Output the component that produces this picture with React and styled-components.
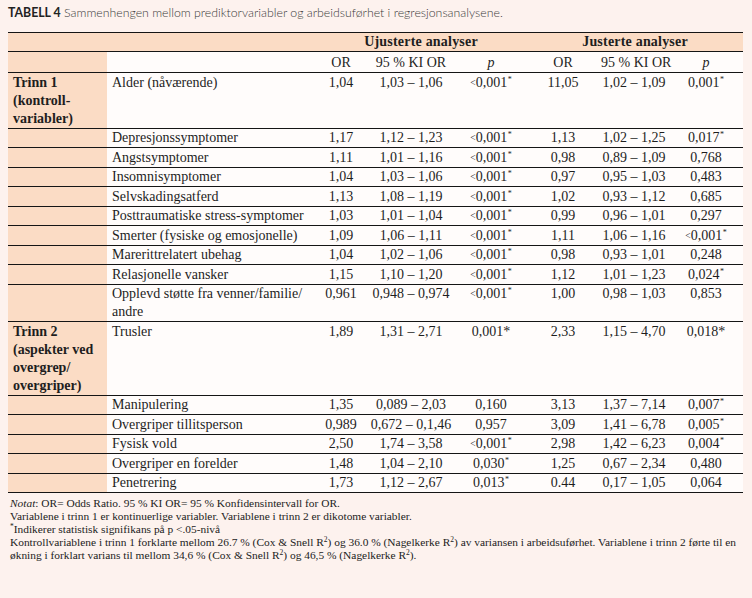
import React from "react";
import styled, { createGlobalStyle } from "styled-components";

const GlobalStyle = createGlobalStyle`
  html, body { margin: 0; padding: 0; }
  body { background: #fdf2ee; }
`;

const Page = styled.div`
  width: 752px;
  height: 598px;
  box-sizing: border-box;
  padding: 5px 9px 0 8px;
  background: #fdf2ee;
  overflow: hidden;
`;

const Caption = styled.div`
  font-family: Lato, "Open Sans", sans-serif;
  font-size: 12.3px;
  line-height: 16px;
  color: #3a3a3a;
  font-weight: 300;
  margin-bottom: 11px;
  b { font-weight: 700; color: #222; }
`;

const Table = styled.table`
  width: 735px;
  table-layout: fixed;
  border-collapse: collapse;
  background: #fffcfb;
  font-family: "Liberation Serif", "Times New Roman", serif;
  font-size: 14px;
  color: #1e1e1e;
  border-top: 1.5px solid #151515;
`;

const Th = styled.th`
  font-weight: ${(p) => (p.$bold ? 700 : 400)};
  font-style: ${(p) => (p.$italic ? "italic" : "normal")};
  text-align: center;
  white-space: nowrap;
  padding: ${(p) => (p.$top ? "0 2px 0" : "1px 2px 0")};
  height: ${(p) => (p.$top ? "18px" : "19px")};
  line-height: 18px;
  border-bottom: 1px solid #151515;
  background: ${(p) => (p.$peach ? "#fbdcc5" : "transparent")};
  letter-spacing: ${(p) => (p.$bold ? "0.2px" : "0")};
`;

const HeadRow = styled.tr`
  background: ${(p) => (p.$peach ? "#fbdcc5" : "transparent")};
`;

const StepCell = styled.td`
  background: #fbdcc5;
  font-weight: 700;
  padding: 0.5px 5px 0;
  line-height: 18px;
  vertical-align: top;
  border-bottom: 1px solid #151515;
`;

const LabelCell = styled.td`
  padding: 0.5px 5px 0;
  line-height: 18px;
  vertical-align: top;
  border-bottom: 1px solid #151515;
  white-space: nowrap;
`;

const NumCell = styled.td`
  padding: 0.5px 2px 0;
  line-height: 18px;
  vertical-align: top;
  text-align: center;
  white-space: nowrap;
  border-bottom: 1px solid #151515;
`;

const Star = styled.span`
  font-size: 8px;
  line-height: 0;
  position: relative;
  top: -5px;
  margin-left: 0.5px;
`;

const Lt = styled.span`
  font-size: 9.5px;
  line-height: 0;
  position: relative;
  top: -1px;
`;

const Notes = styled.div`
  margin-top: 4px;
  padding-left: 2px;
  font-family: "Liberation Serif", "Times New Roman", serif;
  font-size: 11.4px;
  line-height: 13px;
  color: #222;
  width: 733px;
  i { font-style: italic; }
  sup { font-size: 7.5px; line-height: 0; vertical-align: 4px; }
`;

const NoteLine = styled.div``;

const Pval = ({ v }) => {
  let lt = false;
  let sup = false;
  let plain = false;
  let s = v;
  if (s.startsWith("<")) {
    lt = true;
    s = s.slice(1);
  }
  if (s.endsWith("*")) {
    sup = true;
    s = s.slice(0, -1);
  } else if (s.endsWith("+")) {
    plain = true;
    s = s.slice(0, -1);
  }
  return (
    <>
      {lt && <Lt>&lt;</Lt>}
      {s}
      {sup && <Star>*</Star>}
      {plain && "*"}
    </>
  );
};

const step1 = [
  ["Alder (nåværende)", "1,04", "1,03 – 1,06", "<0,001*", "11,05", "1,02 – 1,09", "0,001*"],
  ["Depresjonssymptomer", "1,17", "1,12 – 1,23", "<0,001*", "1,13", "1,02 – 1,25", "0,017*"],
  ["Angstsymptomer", "1,11", "1,01 – 1,16", "<0,001*", "0,98", "0,89 – 1,09", "0,768"],
  ["Insomnisymptomer", "1,04", "1,03 – 1,06", "<0,001*", "0,97", "0,95 – 1,03", "0,483"],
  ["Selvskadingsatferd", "1,13", "1,08 – 1,19", "<0,001*", "1,02", "0,93 – 1,12", "0,685"],
  ["Posttraumatiske stress-symptomer", "1,03", "1,01 – 1,04", "<0,001*", "0,99", "0,96 – 1,01", "0,297"],
  ["Smerter (fysiske og emosjonelle)", "1,09", "1,06 – 1,11", "<0,001*", "1,11", "1,06 – 1,16", "<0,001*"],
  ["Marerittrelatert ubehag", "1,04", "1,02 – 1,06", "<0,001*", "0,98", "0,93 – 1,01", "0,248"],
  ["Relasjonelle vansker", "1,15", "1,10 – 1,20", "<0,001*", "1,12", "1,01 – 1,23", "0,024*"],
  [["Opplevd støtte fra venner/familie/", "andre"], "0,961", "0,948 – 0,974", "<0,001*", "1,00", "0,98 – 1,03", "0,853"],
];

const step2 = [
  ["Trusler", "1,89", "1,31 – 2,71", "0,001+", "2,33", "1,15 – 4,70", "0,018+"],
  ["Manipulering", "1,35", "0,089 – 2,03", "0,160", "3,13", "1,37 – 7,14", "0,007*"],
  ["Overgriper tillitsperson", "0,989", "0,672 – 0,1,46", "0,957", "3,09", "1,41 – 6,78", "0,005*"],
  ["Fysisk vold", "2,50", "1,74 – 3,58", "<0,001*", "2,98", "1,42 – 6,23", "0,004*"],
  ["Overgriper en forelder", "1,48", "1,04 – 2,10", "0,030*", "1,25", "0,67 – 2,34", "0,480"],
  ["Penetrering", "1,73", "1,12 – 2,67", "0,013*", "0.44", "0,17 – 1,05", "0,064"],
];

const Lines = ({ lines }) =>
  lines.map((l, i) => (
    <React.Fragment key={i}>
      {i > 0 && <br />}
      {l}
    </React.Fragment>
  ));

const DataRow = ({ row, step }) => {
  const [label, or1, ci1, p1, or2, ci2, p2] = row;
  return (
    <tr>
      <StepCell>{step ? <Lines lines={step} /> : null}</StepCell>
      <LabelCell>{Array.isArray(label) ? <Lines lines={label} /> : label}</LabelCell>
      <NumCell>{or1}</NumCell>
      <NumCell>{ci1}</NumCell>
      <NumCell><Pval v={p1} /></NumCell>
      <NumCell>{or2}</NumCell>
      <NumCell>{ci2}</NumCell>
      <NumCell><Pval v={p2} /></NumCell>
    </tr>
  );
};

export default function App() {
  return (
    <Page>
      <GlobalStyle />
      <Caption>
        <b>TABELL 4</b> Sammenhengen mellom prediktorvariabler og arbeidsuførhet i regresjonsanalysene.
      </Caption>
      <Table>
        <colgroup>
          <col style={{ width: 99 }} />
          <col style={{ width: 208 }} />
          <col style={{ width: 52 }} />
          <col style={{ width: 88 }} />
          <col style={{ width: 72 }} />
          <col style={{ width: 72 }} />
          <col style={{ width: 70 }} />
          <col style={{ width: 74 }} />
        </colgroup>
        <thead>
          <HeadRow $peach>
            <Th $top />
            <Th $top />
            <Th $top $bold colSpan={3}>Ujusterte analyser</Th>
            <Th $top $bold colSpan={3}>Justerte analyser</Th>
          </HeadRow>
          <HeadRow>
            <Th $peach />
            <Th />
            <Th>OR</Th>
            <Th>95 % KI OR</Th>
            <Th $italic>p</Th>
            <Th>OR</Th>
            <Th>95 % KI OR</Th>
            <Th $italic>p</Th>
          </HeadRow>
        </thead>
        <tbody>
          {step1.map((r, i) => (
            <DataRow key={"a" + i} row={r} step={i === 0 ? ["Trinn 1", "(kontroll-", "variabler)"] : null} />
          ))}
          {step2.map((r, i) => (
            <DataRow
              key={"b" + i}
              row={r}
              step={i === 0 ? ["Trinn 2", "(aspekter ved", "overgrep/", "overgriper)"] : null}
            />
          ))}
        </tbody>
      </Table>
      <Notes>
        <NoteLine><i>Notat</i>: OR= Odds Ratio. 95 % KI OR= 95 % Konfidensintervall for OR.</NoteLine>
        <NoteLine>Variablene i trinn 1 er kontinuerlige variabler. Variablene i trinn 2 er dikotome variabler.</NoteLine>
        <NoteLine><sup>*</sup>Indikerer statistisk signifikans på p &lt;.05-nivå</NoteLine>
        <NoteLine>
          Kontrollvariablene i trinn 1 forklarte mellom 26.7 % (Cox &amp; Snell R<sup>2</sup>) og 36.0 % (Nagelkerke R<sup>2</sup>) av variansen i arbeidsuførhet. Variablene i trinn 2 førte til en økning i forklart varians til mellom 34,6 % (Cox &amp; Snell R<sup>2</sup>) og 46,5 % (Nagelkerke R<sup>2</sup>).
        </NoteLine>
      </Notes>
    </Page>
  );
}
